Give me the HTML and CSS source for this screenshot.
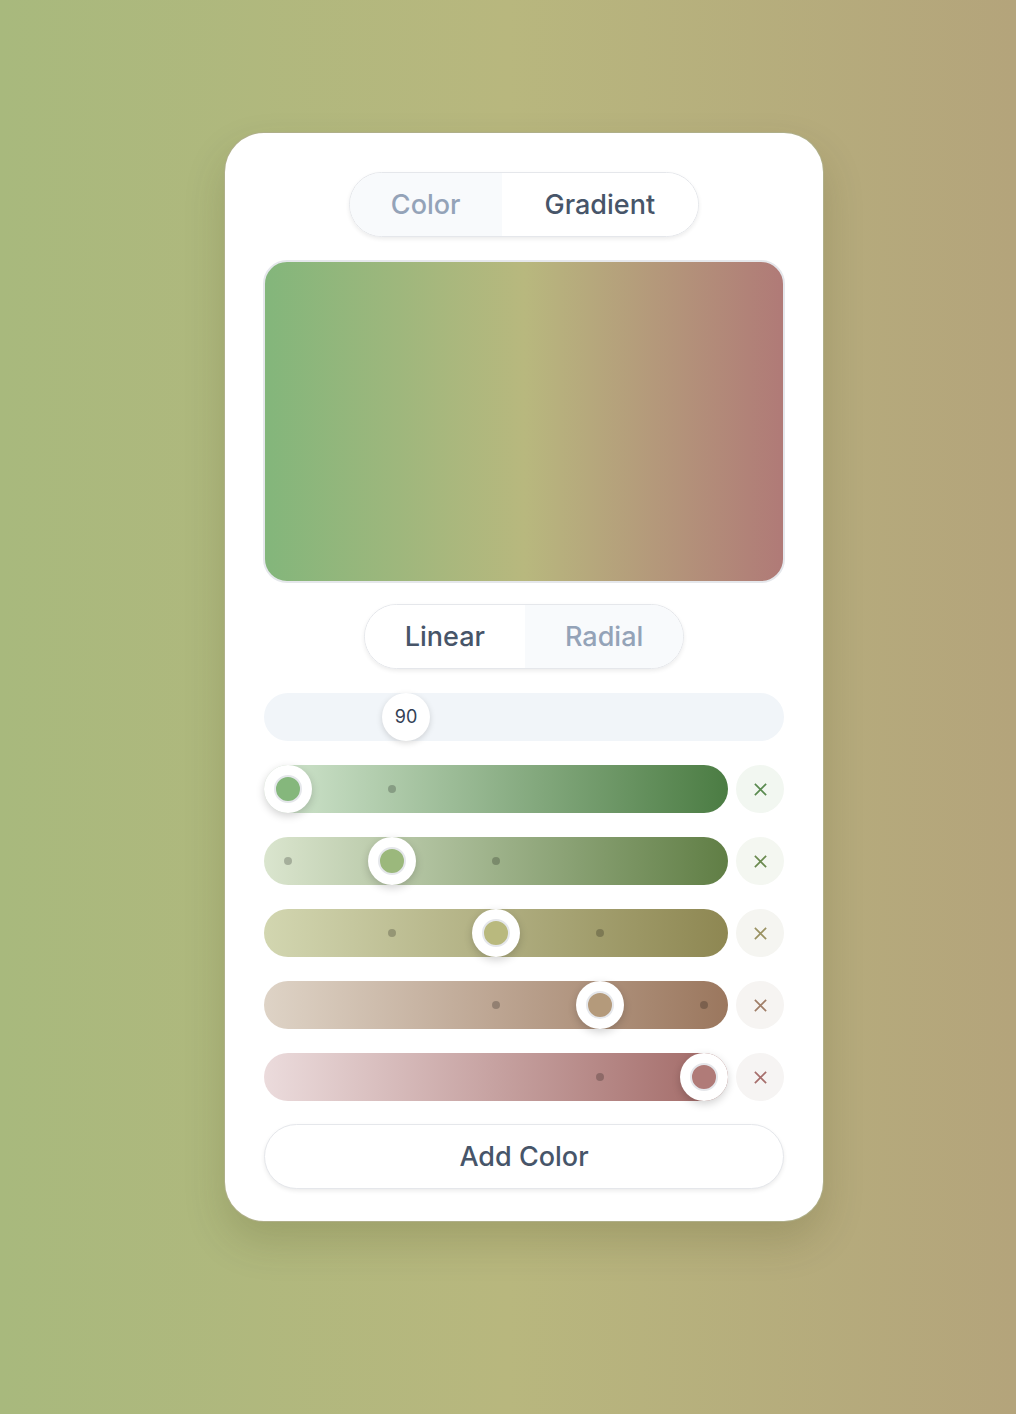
FILE: index.html
```html
<!DOCTYPE html>
<html lang="en">
<head>
  <meta charset="UTF-8">
  <title>Gradient Picker</title>
  <link rel="stylesheet" href="styles.css">
</head>
<body>
<div class="page">
  <div class="card">
    <!-- mode switch -->
    <div class="seg seg-mode">
      <button class="seg-btn">Color</button>
      <button class="seg-btn active">Gradient</button>
    </div>

    <div class="preview"></div>

    <!-- type switch -->
    <div class="seg seg-type">
      <button class="seg-btn active">Linear</button>
      <button class="seg-btn">Radial</button>
    </div>

    <div class="angle">
      <div class="angle-thumb" style="left: 118px">90</div>
    </div>

    <div class="stops">
      <div class="stop">
        <div class="track t1">
          <span class="dot" style="left: 128px"></span>
          <span class="thumb" style="left: 0px"><i style="background: #85b77c"></i></span>
        </div>
        <button class="remove r1"><svg viewBox="0 0 16 16"><path d="M2 2L14 14M14 2L2 14"/></svg></button>
      </div>
      <div class="stop">
        <div class="track t2">
          <span class="dot" style="left: 24px"></span>
          <span class="dot" style="left: 232px"></span>
          <span class="thumb" style="left: 104px"><i style="background: #9bb87c"></i></span>
        </div>
        <button class="remove r2"><svg viewBox="0 0 16 16"><path d="M2 2L14 14M14 2L2 14"/></svg></button>
      </div>
      <div class="stop">
        <div class="track t3">
          <span class="dot" style="left: 128px"></span>
          <span class="dot" style="left: 336px"></span>
          <span class="thumb" style="left: 208px"><i style="background: #b9b97e"></i></span>
        </div>
        <button class="remove r3"><svg viewBox="0 0 16 16"><path d="M2 2L14 14M14 2L2 14"/></svg></button>
      </div>
      <div class="stop">
        <div class="track t4">
          <span class="dot" style="left: 232px"></span>
          <span class="dot" style="left: 440px"></span>
          <span class="thumb" style="left: 312px"><i style="background: #b49a7b"></i></span>
        </div>
        <button class="remove r4"><svg viewBox="0 0 16 16"><path d="M2 2L14 14M14 2L2 14"/></svg></button>
      </div>
      <div class="stop">
        <div class="track t5">
          <span class="dot" style="left: 336px"></span>
          <span class="thumb" style="left: 416px"><i style="background: #b07b78"></i></span>
        </div>
        <button class="remove r5"><svg viewBox="0 0 16 16"><path d="M2 2L14 14M14 2L2 14"/></svg></button>
      </div>
    </div>

    <button class="add">Add Color</button>
  </div>
</div>
</body>
</html>
```

FILE: styles.css
```css
* {
  margin: 0;
  padding: 0;
  box-sizing: border-box;
}

body {
  min-height: 1414px;
  background: linear-gradient(90deg, #a8b97d 0%, #b8b77e 50%, #b4a47b 100%);
  font-family: Inter, "Noto Sans", sans-serif;
}

.page {
  padding: 132px 0 0 224px;
}

.card {
  width: 600px;
  background: #fff;
  border: 1px solid rgba(110, 110, 40, 0.55);
  border-radius: 40px;
  padding: 39px 39px 32px;
  box-shadow: 0 20px 40px rgba(60, 60, 20, 0.18);
  display: flex;
  flex-direction: column;
  align-items: center;
}

button {
  font-family: inherit;
  border: 0;
  background: none;
  cursor: pointer;
}

.seg {
  display: flex;
  border: 1px solid #e5e7eb;
  border-radius: 999px;
  overflow: hidden;
  box-shadow: 0 2px 4px rgba(0, 0, 0, 0.08);
}

.seg-btn {
  height: 63px;
  padding: 0 41px;
  font-size: 27px;
  font-weight: 500;
  color: #94a3b8;
  background: #f8fafc;
}

.seg-btn.active {
  color: #475569;
  background: #fff;
}

.seg-mode .seg-btn:last-child {
  padding: 0 43px;
}

.preview {
  width: 522px;
  height: 323px;
  margin-top: 23px;
  border: 2px solid #e5e7eb;
  border-radius: 24px;
  background: linear-gradient(90deg, #83b67b 0%, #b8b87e 50%, #b07a77 100%);
}

.seg-type {
  margin-top: 21px;
}

.seg-type .seg-btn {
  padding: 0 40px;
}

.angle {
  position: relative;
  width: 520px;
  height: 48px;
  margin-top: 24px;
  border-radius: 24px;
  background: #f1f5f9;
}

.angle-thumb {
  position: absolute;
  top: 0;
  width: 48px;
  height: 48px;
  border-radius: 50%;
  background: #fff;
  box-shadow: 0 2px 6px rgba(0, 0, 0, 0.15);
  font-size: 18px;
  color: #334155;
  line-height: 48px;
  text-align: center;
}

.stops {
  width: 520px;
  margin-top: 24px;
  display: flex;
  flex-direction: column;
  gap: 24px;
}

.stop {
  display: flex;
  gap: 8px;
}

.track {
  position: relative;
  flex: 1;
  height: 48px;
  border-radius: 24px;
}

.t1 { background: linear-gradient(90deg, #d3e7d0, #4b7c43); }
.t2 { background: linear-gradient(90deg, #dae5ce, #607e45); }
.t3 { background: linear-gradient(90deg, #d2d6b0, #8e8752); }
.t4 { background: linear-gradient(90deg, #ded3c6, #9b775e); }
.t5 { background: linear-gradient(90deg, #ebdbdc, #a16865); }

.dot {
  position: absolute;
  top: 20px;
  width: 8px;
  height: 8px;
  margin-left: -4px;
  border-radius: 50%;
  background: rgba(0, 0, 0, 0.22);
}

.thumb {
  position: absolute;
  top: 0;
  width: 48px;
  height: 48px;
  border-radius: 50%;
  background: #fff;
  box-shadow: 0 3px 8px rgba(0, 0, 0, 0.18);
  display: flex;
  align-items: center;
  justify-content: center;
}

.thumb i {
  width: 28px;
  height: 28px;
  border-radius: 50%;
  border: 2px solid #e5e7eb;
}

.remove {
  width: 48px;
  height: 48px;
  border-radius: 50%;
  display: flex;
  align-items: center;
  justify-content: center;
}

.remove svg {
  width: 15px;
  height: 15px;
  fill: none;
  stroke-width: 1.8;
}

.r1 { background: #f2f7f1; stroke: #5a8a50; }
.r2 { background: #f4f7f1; stroke: #6a8a4f; }
.r3 { background: #f5f5f1; stroke: #9a9262; }
.r4 { background: #f6f4f2; stroke: #a07e68; }
.r5 { background: #f6f4f3; stroke: #a66e6c; }

.add {
  width: 520px;
  height: 65px;
  margin-top: 23px;
  border: 1px solid #e5e7eb;
  border-radius: 999px;
  background: #fff;
  box-shadow: 0 2px 4px rgba(0, 0, 0, 0.08);
  font-size: 27px;
  font-weight: 500;
  color: #475569;
}
```
